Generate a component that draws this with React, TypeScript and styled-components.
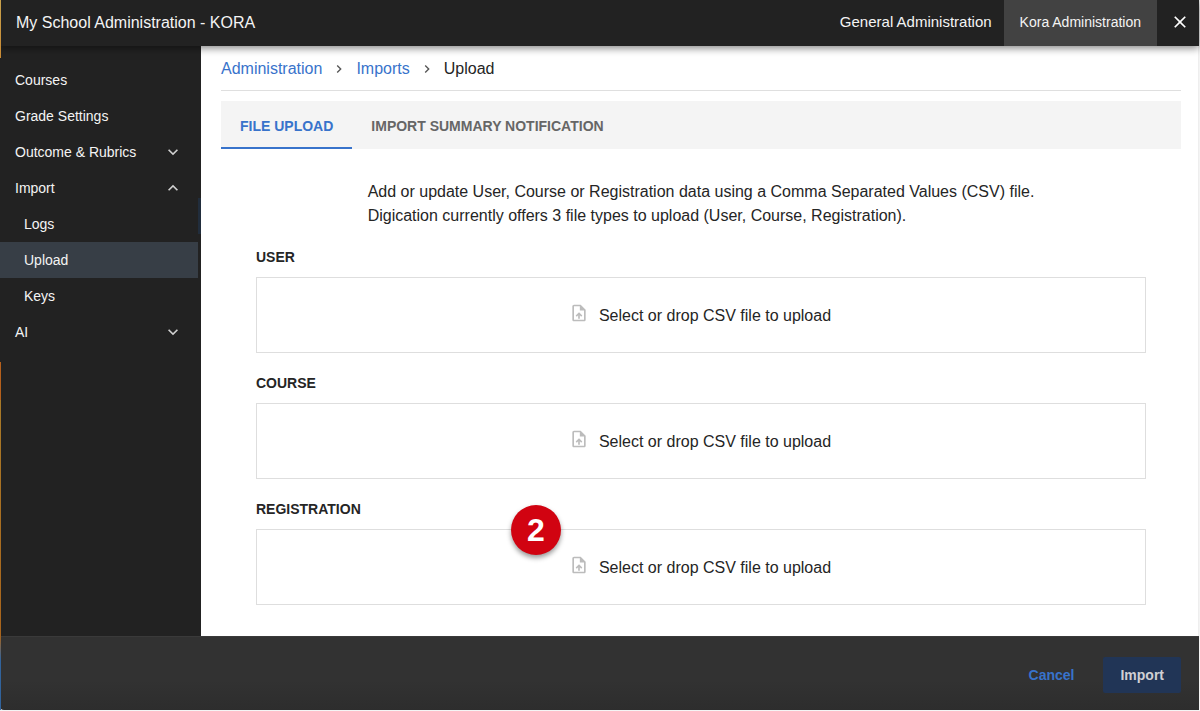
import React from 'react';
import styled, { createGlobalStyle } from 'styled-components';
import { MdChevronRight, MdClose, MdExpandLess, MdExpandMore, MdOutlineUploadFile } from 'react-icons/md';

const GlobalStyle = createGlobalStyle`
  *, *::before, *::after { box-sizing: border-box; }
  body {
    margin: 0;
    background: #f4f4f4;
    color: #252525;
    font-family: "Liberation Sans", Arial, sans-serif;
    font-size: 16px;
    line-height: 24px;
  }
  button { font: inherit; border: 0; cursor: pointer; }
  a { text-decoration: none; }
`;

const Frame = styled.div`
  position: relative;
  display: flex;
  flex-direction: column;
  min-height: calc(100vh - 1px);
  margin: 0 1px 1px 0;

  /* Sliver of the page behind the dialog, along its left edge */
  &::before {
    content: '';
    position: absolute;
    z-index: 3;
    inset: 0 auto 0 0;
    width: 1px;
    background: linear-gradient(
      #c9a24c 0, #c98a34 58px, transparent 58px, transparent 362px,
      #b5601c 362px, #b5601c 400px, #a87a28 400px, #a8641c 636px, #31639c 660px, #31639c 100%
    );
  }
`;

const Header = styled.header`
  position: relative;
  z-index: 2;
  display: flex;
  align-items: stretch;
  height: 46px;
  background: #222;
  color: #f4f4f4;
  box-shadow: 0 2px 8px rgba(0, 0, 0, 0.5);
`;

const Title = styled.h1`
  flex: 1;
  margin: 0;
  padding-left: 16px;
  font-size: 16px;
  font-weight: 400;
  line-height: 46px;
`;

const HeaderLink = styled.a<{ $active?: boolean; $size: number }>`
  padding: 0 ${(p) => (p.$active ? '16px' : '12px')};
  background: ${(p) => (p.$active ? '#424242' : 'transparent')};
  color: #f4f4f4;
  font-size: ${(p) => p.$size}px;
  line-height: 44px;
`;

const CloseButton = styled.button`
  display: flex;
  align-items: center;
  justify-content: center;
  width: 42px;
  padding: 0 0 2px 4px;
  background: transparent;
  color: #fff;
`;

const Body = styled.div`
  display: flex;
  flex: 1;
`;

const Sidebar = styled.nav`
  position: relative;
  flex: none;
  width: 201px;
  padding: 16px 3px 16px 0;
  background: #222;

  /* Highlight of the selected entry in the panel underneath */
  &::after {
    content: '';
    position: absolute;
    top: 152px;
    right: 0;
    width: 3px;
    height: 36px;
    background: #212d3c;
  }
`;

const NavList = styled.ul`
  margin: 0;
  padding: 0;
  list-style: none;
`;

const navItem = `
  display: flex;
  align-items: center;
  justify-content: space-between;
  width: 100%;
  height: 36px;
  color: #f4f4f4;
  font-size: 14px;
  text-align: left;
`;

const NavLink = styled.a<{ $nested?: boolean; $active?: boolean }>`
  ${navItem}
  padding: 0 15px 0 ${(p) => (p.$nested ? '24px' : '15px')};
  background: ${(p) => (p.$active ? '#373e46' : 'transparent')};
`;

const NavToggle = styled.button`
  && { ${navItem} }
  padding: 0 15px;
  background: transparent;
  svg { color: #d0d0d0; }
`;

const Main = styled.main`
  flex: 1;
  min-width: 0;
  padding: 0 17px 31px 20px;
  border-right: 1px solid #eee;
  background: #fff;
`;

const Breadcrumb = styled.nav`
  display: flex;
  align-items: center;
  gap: 9px;
  height: 45px;
  margin-bottom: 10px;
  padding-top: 1px;
  border-bottom: 1px solid #dfdfdf;
  a { color: #3873cb; }
  svg { color: #555; }
`;

const Tabs = styled.div`
  display: flex;
  height: 48px;
  margin-bottom: 31px;
  background: #f4f4f4;
`;

const Tab = styled.button<{ $active?: boolean }>`
  padding: 3px 19px 0;
  border-bottom: 2px solid ${(p) => (p.$active ? '#3873cb' : 'transparent')};
  background: transparent;
  color: ${(p) => (p.$active ? '#3873cb' : '#666')};
  && { font-size: 14px; font-weight: 700; }
`;

const Intro = styled.p`
  width: fit-content;
  margin: 0 auto 19px;
`;

const Uploads = styled.form`
  display: grid;
  gap: 20px;
  padding: 0 35px;
`;

const UploadGroup = styled.section`
  display: grid;
  gap: 10px;
`;

const UploadTitle = styled.h2`
  margin: 0;
  font-size: 14px;
  font-weight: 700;
  line-height: 20px;
`;

const DropZone = styled.label`
  position: relative;
  display: flex;
  align-items: center;
  justify-content: center;
  gap: 10px;
  height: 76px;
  padding: 2px 2px 0 0;
  border: 1px solid #dedede;
  cursor: pointer;
  svg { margin-bottom: 6px; color: #bcbcbc; }
`;

const FileInput = styled.input`
  position: absolute;
  width: 1px;
  height: 1px;
  opacity: 0;
`;

const StepBadge = styled.span`
  position: absolute;
  top: -25px;
  left: calc(50% - 190px);
  width: 50px;
  height: 50px;
  border-radius: 50%;
  background: #d10311;
  box-shadow: 0 3px 5px rgba(0, 0, 0, 0.4);
  color: #fff;
  font-size: 32px;
  font-weight: 700;
  line-height: 50px;
  text-align: center;
`;

const Footer = styled.footer`
  display: flex;
  align-items: center;
  justify-content: flex-end;
  gap: 12px;
  height: 74px;
  padding: 2px 18px 0;
  border-top: 1px solid #3a3a3a;
  border-bottom-left-radius: 4px;
  background: linear-gradient(#323232 60%, #2d2d2d);
`;

const ActionButton = styled.button<{ $primary?: boolean }>`
  height: 36px;
  padding: 0 17px;
  border-radius: 2px;
  background: ${(p) => (p.$primary ? '#213556' : 'transparent')};
  color: ${(p) => (p.$primary ? '#d0d0d4' : '#3873cb')};
  && { font-size: 14px; font-weight: 700; }
`;

const UPLOADS = [
  { title: 'USER' },
  { title: 'COURSE' },
  { title: 'REGISTRATION', step: 2 },
];

export default function App() {
  return (
    <>
      <GlobalStyle />
      <Frame>
        <Header>
          <Title>My School Administration - KORA</Title>
          <HeaderLink href="#general" $size={15}>General Administration</HeaderLink>
          <HeaderLink href="#kora" $size={14} $active>Kora Administration</HeaderLink>
          <CloseButton type="button" aria-label="Close"><MdClose size={20} /></CloseButton>
        </Header>
        <Body>
          <Sidebar>
            <NavList>
              <li><NavLink href="#courses">Courses</NavLink></li>
              <li><NavLink href="#grades">Grade Settings</NavLink></li>
              <li><NavToggle type="button">Outcome &amp; Rubrics<MdExpandMore size={20} /></NavToggle></li>
              <li>
                <NavToggle type="button" aria-expanded="true">Import<MdExpandLess size={20} /></NavToggle>
                <NavList>
                  <li><NavLink href="#logs" $nested>Logs</NavLink></li>
                  <li><NavLink href="#upload" $nested $active>Upload</NavLink></li>
                  <li><NavLink href="#keys" $nested>Keys</NavLink></li>
                </NavList>
              </li>
              <li><NavToggle type="button">AI<MdExpandMore size={20} /></NavToggle></li>
            </NavList>
          </Sidebar>
          <Main>
            <Breadcrumb>
              <a href="#administration">Administration</a>
              <MdChevronRight size={16} />
              <a href="#imports">Imports</a>
              <MdChevronRight size={16} />
              <span>Upload</span>
            </Breadcrumb>
            <Tabs role="tablist">
              <Tab type="button" role="tab" aria-selected="true" $active>FILE UPLOAD</Tab>
              <Tab type="button" role="tab" aria-selected="false">IMPORT SUMMARY NOTIFICATION</Tab>
            </Tabs>
            <Intro>
              Add or update User, Course or Registration data using a Comma Separated Values (CSV) file.
              <br />
              Digication currently offers 3 file types to upload (User, Course, Registration).
            </Intro>
            <Uploads id="imports-form">
              {UPLOADS.map(({ title, step }) => (
                <UploadGroup key={title}>
                  <UploadTitle>{title}</UploadTitle>
                  <DropZone>
                    <FileInput type="file" accept=".csv" />
                    <MdOutlineUploadFile size={20} />
                    Select or drop CSV file to upload
                    {step && <StepBadge>{step}</StepBadge>}
                  </DropZone>
                </UploadGroup>
              ))}
            </Uploads>
          </Main>
        </Body>
        <Footer>
          <ActionButton type="button">Cancel</ActionButton>
          <ActionButton type="submit" form="imports-form" $primary>Import</ActionButton>
        </Footer>
      </Frame>
    </>
  );
}
